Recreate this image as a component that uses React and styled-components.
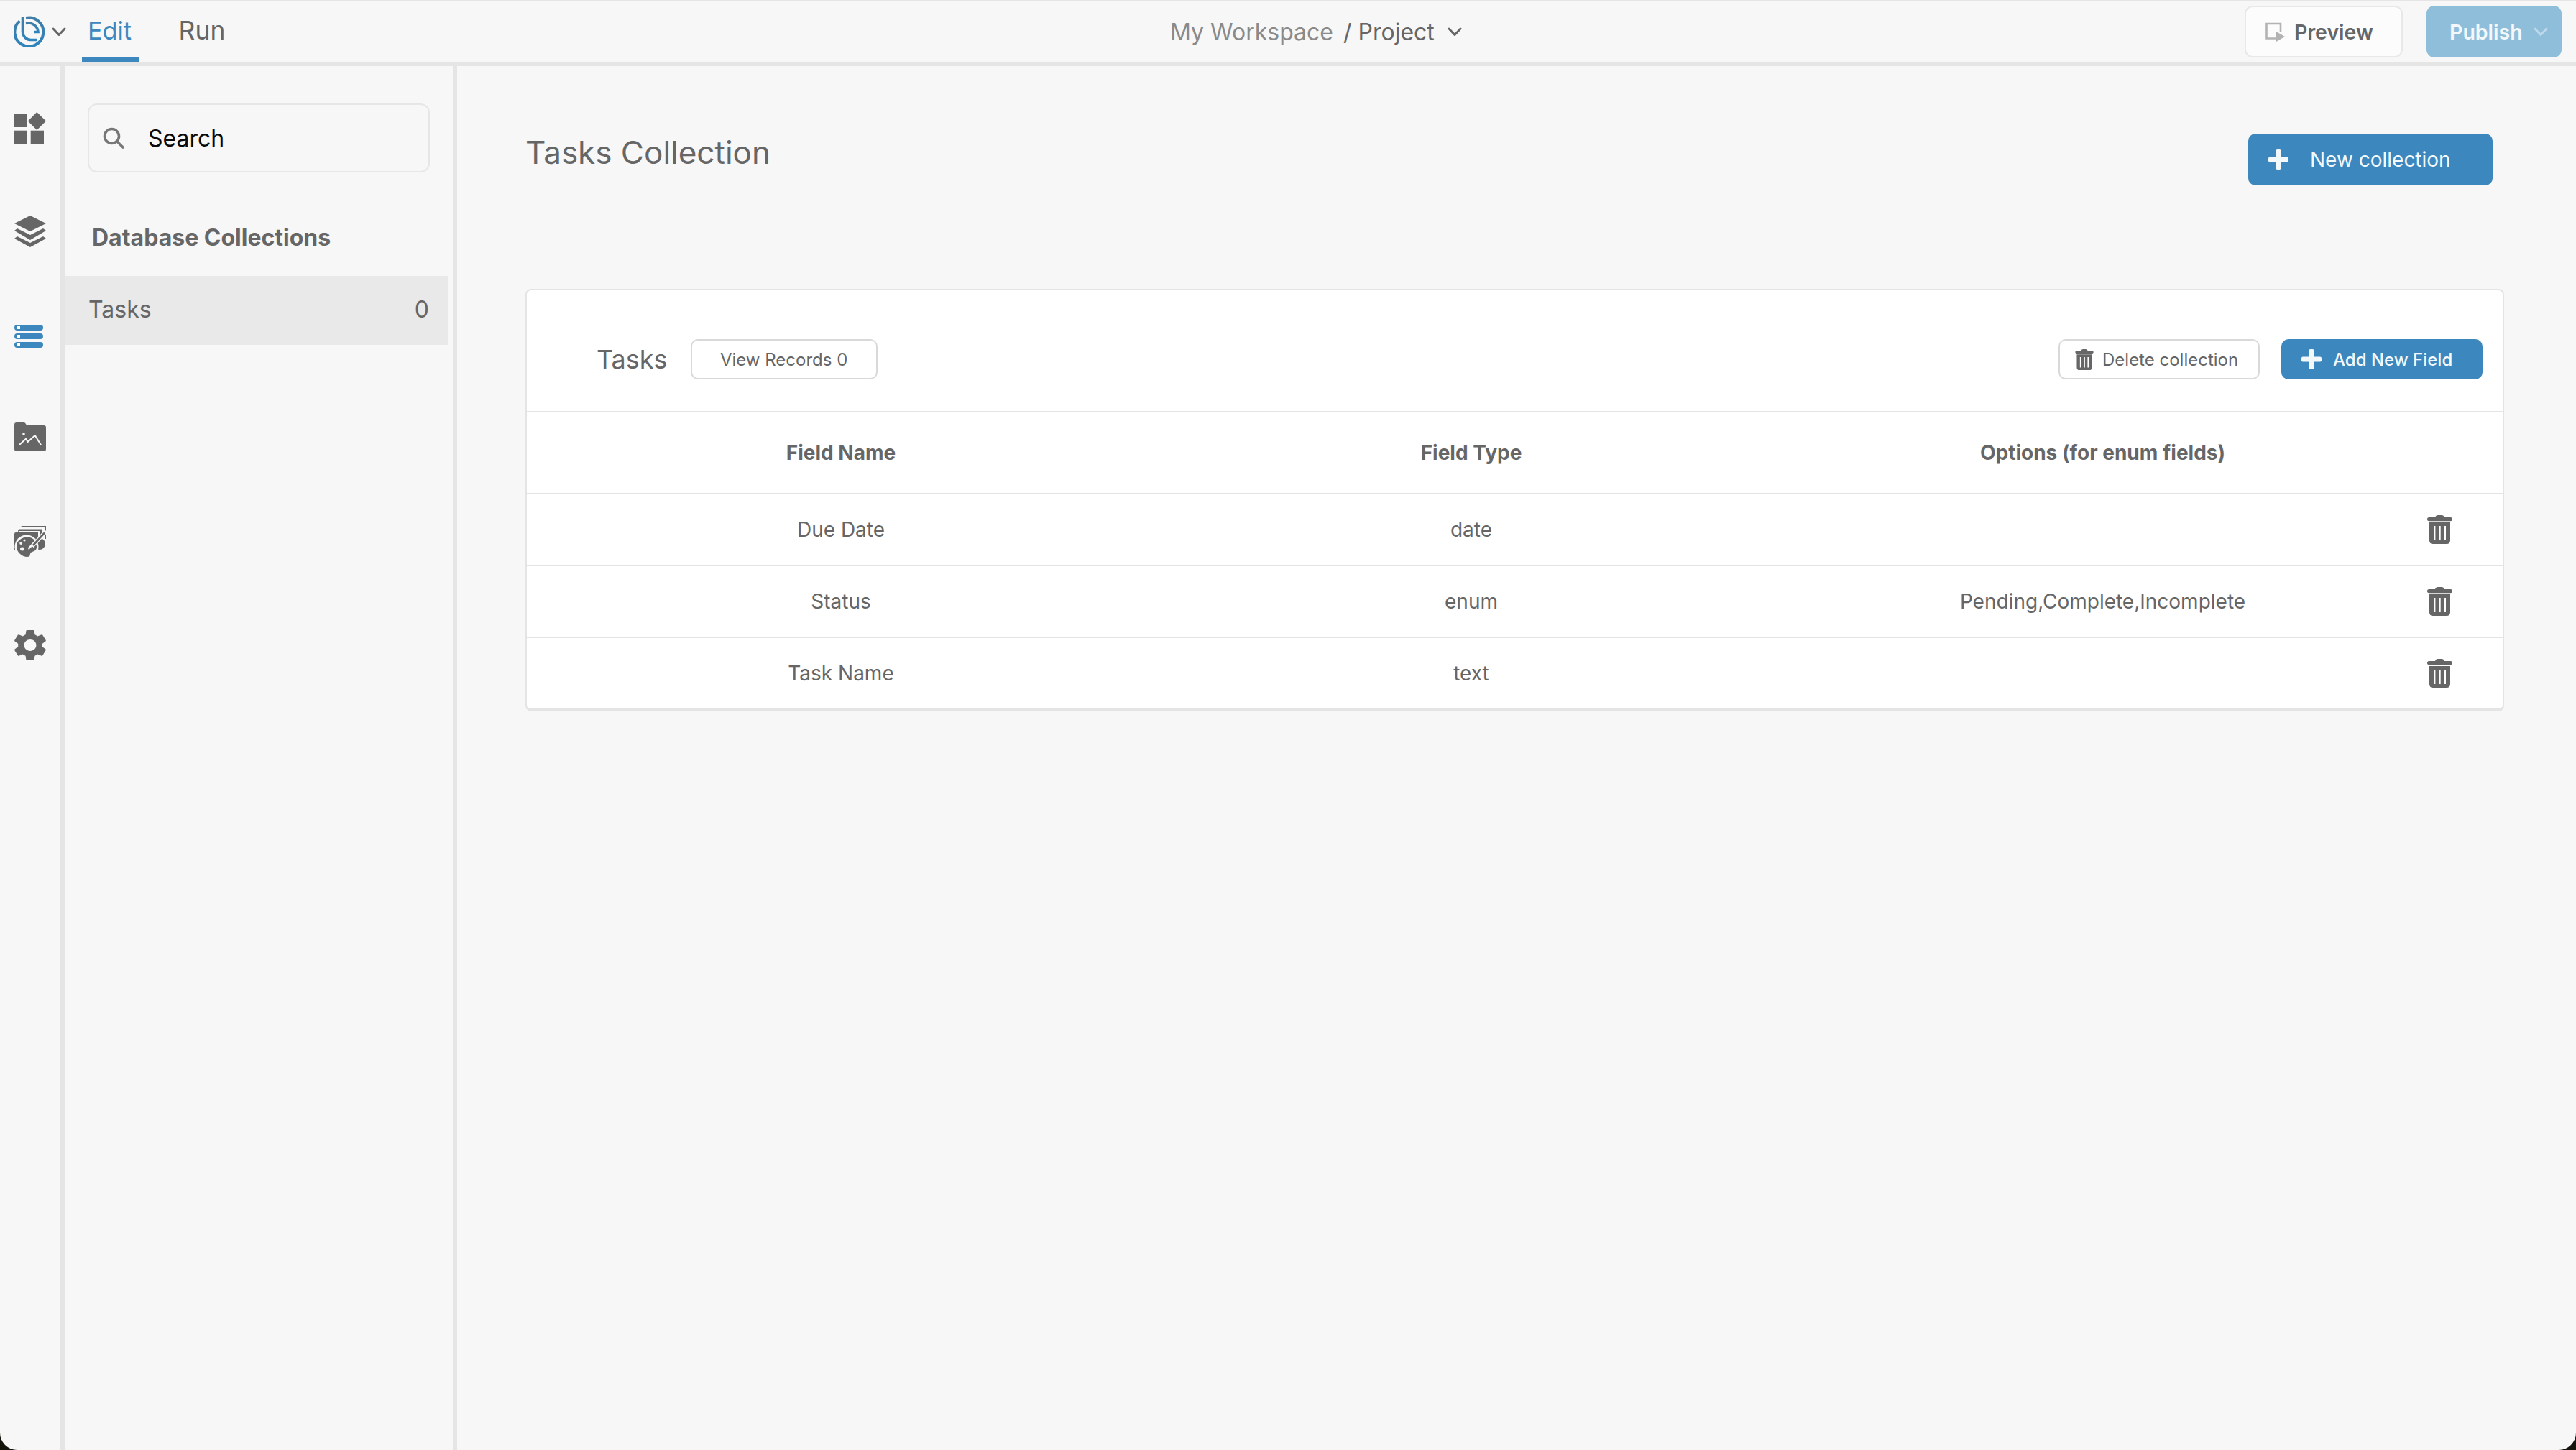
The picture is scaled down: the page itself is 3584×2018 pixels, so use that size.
import React from "react";
import styled, { createGlobalStyle } from "styled-components";

const GlobalStyle = createGlobalStyle`
  html, body { margin: 0; padding: 0; width: 3584px; height: 2018px; overflow: hidden; background: #14140c; }
  #root { width: 3584px; height: 2018px; }
  * { box-sizing: border-box; }
`;

const Page = styled.div`
  width: 3584px; height: 2018px; background: #f7f7f7; overflow: hidden;
  border-radius: 0 0 24px 24px; display: flex; flex-direction: column;
  font-family: Inter, "Liberation Sans", sans-serif; color: #666;
`;

const TopBar = styled.header`
  flex: none; height: 92px; display: flex; align-items: flex-start;
  border-top: 2px solid #e5e5e5; border-bottom: 6px solid #e5e5e5;
`;
const BarLeft = styled.div`
  width: 1628px; height: 84px; display: flex; align-items: flex-start; padding-left: 20px;
`;
const LogoWrap = styled.div`
  width: 44px; height: 44px; margin-top: 20px; flex: none; display: flex;
`;
const LogoChevron = styled.div`
  width: 20px; margin: 36px 0 0 8px; flex: none; display: flex;
`;
const Tab = styled.div`
  height: 84px; width: ${(p) => p.$w}px; margin-left: ${(p) => p.$ml}px; text-align: center;
  font-size: ${(p) => p.$fs}px; line-height: 42px; padding: 20px ${(p) => p.$pr}px 0 0;
  color: ${(p) => (p.$active ? "#3c87be" : "#666")};
  border-bottom: 6px solid ${(p) => (p.$active ? "#3c87be" : "transparent")};
`;
const Crumbs = styled.div`
  height: 84px; display: flex; align-items: center; font-size: 32px;
`;
const CrumbMuted = styled.span`color: #8a8a8a; margin-right: 14px;`;
const CrumbChevron = styled.span`display: flex; margin-left: 18px;`;
const BarRight = styled.div`
  margin-left: auto; padding: 6px 20px 0 0; display: flex; gap: 33px;
`;
const PreviewButton = styled.div`
  width: 220px; height: 72px; border: 2.5px solid #e8e8e8; border-radius: 11px; background: #fcfcfc;
  display: flex; align-items: center; padding-left: 27px; gap: 13px;
  font-size: 28.5px; font-weight: 600; color: #666;
`;
const PublishButton = styled.div`
  width: 188px; height: 72px; border-radius: 11px; background: #8fbedb; color: #f4f8fb;
  display: flex; align-items: center; padding-left: 32px; gap: 15px;
  font-size: 28.5px; font-weight: 600;
`;

const Body = styled.div`flex: 1; display: flex; min-height: 0;`;

const Rail = styled.nav`
  width: 90px; flex: none; border-right: 6px solid #e5e5e5; padding-left: 20px;
  display: flex; flex-direction: column;
`;
const RailItem = styled.div`
  height: 44px; width: 44px; margin-top: ${(p) => p.$top}px; display: flex; align-items: center; justify-content: flex-start;
  color: ${(p) => (p.$active ? "#3c87be" : "#666")};
`;

const Panel = styled.aside`
  width: 546px; flex: none; border-right: 6px solid #e5e5e5; padding-top: 52px; padding-right: 6px;
`;
const SearchBox = styled.div`
  width: 476px; height: 96px; margin-left: 32px; border: 2px solid #e6e6e6; border-radius: 13px;
  display: flex; align-items: center; padding-left: 19px; gap: 33px;
  font-size: 32px; color: #0a0a0a;
`;
const PanelTitle = styled.h2`
  margin: 68px 0 0 38px; height: 45px; font-size: 32px; line-height: 46px; font-weight: 700; color: #666;
`;
const CollectionRow = styled.div`
  margin-top: 31px; height: 96px; background: #e9e9e9; display: flex; align-items: center;
  justify-content: space-between; padding: 0 27px 3px 33px; font-size: 32px; color: #666;
`;

const Main = styled.main`flex: 1; padding: 0 100px 0 95px; min-width: 0;`;
const MainHead = styled.div`
  height: 310px; display: flex; justify-content: space-between; align-items: flex-start; padding-right: 16px;
`;
const MainTitle = styled.h1`
  margin: 92px 0 0; font-size: 44px; line-height: 56px; font-weight: 400; color: #666;
`;
const PrimaryButton = styled.div`
  margin-top: ${(p) => p.$top || 0}px; width: ${(p) => p.$w}px; height: ${(p) => p.$h}px;
  padding-left: ${(p) => p.$pl}px; gap: ${(p) => p.$gap}px; font-size: ${(p) => p.$fs}px;
  font-weight: ${(p) => p.$fw || 400};
  background: #3c87be; color: #f3f8fb; border-radius: 10px; display: flex; align-items: center;
`;

const Card = styled.section`
  background: #fff; border: 2px solid #e4e4e4; border-bottom-width: 4px; border-radius: 8px;
`;
const CardHead = styled.div`
  height: 170px; padding: 68px 28px 44px 97px; display: flex; align-items: center;
  border-bottom: 2px solid #e4e4e4;
`;
const CardTitle = styled.div`font-size: 36px; margin-right: 32px;`;
const ButtonSpacer = styled.div`flex: 1;`;
const OutlineButton = styled.div`
  height: 56px; width: ${(p) => p.$w}px; margin-right: ${(p) => p.$mr || 0}px;
  border: 2px solid #d9d9d9; border-radius: 10px; font-size: 24px; color: #666;
  display: flex; align-items: center; justify-content: ${(p) => (p.$icon ? "flex-start" : "center")};
  padding-left: ${(p) => (p.$icon ? 21 : 0)}px; gap: 12px; background: #fff;
`;
const Row = styled.div`
  display: grid; grid-template-columns: 874px 880px 877px 1fr; align-items: center;
  height: ${(p) => p.$h}px; font-size: 28px; font-weight: ${(p) => (p.$head ? 700 : 400)}; color: #666;
  border-bottom: ${(p) => (p.$last ? "none" : "2px solid #e4e4e4")};
`;
const Cell = styled.div`text-align: center;`;
const ActionCell = styled.div`padding-left: 13px; display: flex;`;

const Chevron = ({ size = 20, color = "#666", sw = 3 }) => (
  <svg width={size} height={size * 0.65} viewBox="0 0 20 13" fill="none">
    <path d="M2 2l8 8.5L18 2" stroke={color} strokeWidth={sw} strokeLinecap="round" strokeLinejoin="round" />
  </svg>
);

const Logo = () => (
  <svg width="44" height="44" viewBox="0 0 44 44" fill="none">
    <defs>
      <linearGradient id="lg" x1="0" y1="0" x2="0" y2="1">
        <stop offset="0" stopColor="#3f7fa8" />
        <stop offset="1" stopColor="#2f83bb" />
      </linearGradient>
    </defs>
    <g stroke="url(#lg)" strokeWidth="4">
      <path d="M7.5 7.2A20 20 0 1 0 16 3" />
      <path d="M11.5 1.5V22A11.5 11.5 0 0 0 23 33.5H32" strokeWidth="3.6" />
      <path d="M16 10.6A13.4 13.4 0 0 1 33 22.5H27.5" strokeWidth="3.6" />
    </g>
  </svg>
);

const DashIcon = () => (
  <svg width="44" height="44" viewBox="0 0 44 44" fill="currentColor">
    <rect x="0" y="3" width="18" height="18" />
    <rect x="0" y="25.7" width="18" height="18.3" />
    <rect x="22.7" y="25.7" width="18.3" height="18.3" />
    <path d="M31.3 0L44 12.5 31.3 25 18.8 12.5z" />
  </svg>
);
const LayersIcon = () => (
  <svg width="44" height="44" viewBox="0 0 44 44" fill="currentColor">
    <path d="M22 0L44 11 22 22 0 11z" strokeLinejoin="round" />
    <path d="M4 18L0 21 22 34 44 21 40 18 22 27z" />
    <path d="M4 29L0 32 22 44 44 32 40 29 22 38z" />
  </svg>
);
const ServerIcon = () => (
  <svg width="40" height="32" viewBox="0 0 40 32">
    {[0, 12, 24].map((y) => (
      <g key={y}>
        <rect x="0" y={y} width="40" height="8" rx="4" fill="currentColor" />
        <rect x="4" y={y + 2} width="4" height="4" fill="#fff" />
      </g>
    ))}
  </svg>
);
const FolderIcon = () => (
  <svg width="44" height="40" viewBox="0 0 44 40">
    <path fill="currentColor" d="M3 0H13Q15 0 16 2L17 4H41Q44 4 44 7V37Q44 40 41 40H3Q0 40 0 37V3Q0 0 3 0Z" />
    <circle cx="13" cy="16" r="1.8" fill="#f7f7f7" />
    <path d="M7.3 30.7L16 22.7 18.7 27 28.7 18 36.7 30.7" fill="none" stroke="#f7f7f7" strokeWidth="2" strokeLinecap="round" strokeLinejoin="round" />
  </svg>
);
const PaletteIcon = () => (
  <svg width="44" height="44" viewBox="0 0 44 44">
    <g fill="currentColor">
      <path d="M5 4V2Q5 0 7 0H41V18H39V2H5z" transform="translate(4 0)" />
      <path d="M5 8V7Q5 4.5 7 4.5H38V20H36V7H7z" />
      <path d="M2 9H33V34H0V11Q0 9 2 9Z" />
      <circle cx="35" cy="25" r="8" />
    </g>
    <circle cx="17" cy="29" r="16.5" fill="#f7f7f7" />
    <path fill="currentColor" d="M18 15.5C10 15.5 3 21 3 28.5 3 36 10 43 18 43 23 43 21 39 23 37 25 35 31 36 31 29 31 21 26 15.5 18 15.5Z" />
    <g fill="#f7f7f7">
      <circle cx="14" cy="20" r="1.6" />
      <circle cx="9.2" cy="24" r="2" />
      <ellipse cx="11" cy="32" rx="3" ry="2.4" />
    </g>
    <path d="M42.5 9L22 31" stroke="#f7f7f7" strokeWidth="5.5" strokeLinecap="round" />
    <path d="M42 9.5L26 27" stroke="currentColor" strokeWidth="2.6" />
    <path d="M19 35.5Q21 31 25 28.5L27.5 31Q26 35 20.5 36.5Z" fill="currentColor" />
  </svg>
);
const GearIcon = () => (
  <svg width="44" height="44" viewBox="2.6 2 18.8 20" fill="currentColor" preserveAspectRatio="none">
    <path d="M19.14 12.94c.04-.3.06-.61.06-.94 0-.32-.02-.64-.07-.94l2.03-1.58c.18-.14.23-.41.12-.61l-1.92-3.32c-.12-.22-.37-.29-.59-.22l-2.39.96c-.5-.38-1.03-.7-1.62-.94l-.36-2.54c-.04-.24-.24-.41-.48-.41h-3.84c-.24 0-.43.17-.47.41l-.36 2.54c-.59.24-1.13.57-1.62.94l-2.39-.96c-.22-.08-.47 0-.59.22L2.74 8.87c-.12.21-.08.47.12.61l2.03 1.58c-.05.3-.09.63-.09.94s.02.64.07.94l-2.03 1.58c-.18.14-.23.41-.12.61l1.92 3.32c.12.22.37.29.59.22l2.39-.96c.5.38 1.03.7 1.62.94l.36 2.54c.05.24.24.41.48.41h3.84c.24 0 .44-.17.47-.41l.36-2.54c.59-.24 1.13-.56 1.62-.94l2.39.96c.22.08.47 0 .59-.22l1.92-3.32c.12-.22.07-.47-.12-.61l-2.01-1.58zM12 15.6c-1.98 0-3.6-1.62-3.6-3.6s1.62-3.6 3.6-3.6 3.6 1.62 3.6 3.6-1.62 3.6-3.6 3.6z" />
  </svg>
);
const SearchIcon = () => (
  <svg width="30" height="30" viewBox="0 0 30 30" fill="none" stroke="#777" strokeWidth="3.6" strokeLinecap="round">
    <circle cx="12.5" cy="12.5" r="10" />
    <path d="M20 20l8 8" />
  </svg>
);
const PreviewIcon = () => (
  <svg width="27" height="27" viewBox="0 0 27 27" fill="none">
    <path d="M21 14V2H1.5V22.5H14" stroke="#b3b3b3" strokeWidth="2.6" />
    <path d="M15 13L27 20 15 27z" fill="#b3b3b3" />
  </svg>
);
const PlusIcon = ({ size = 28 }) => (
  <svg width={size} height={size} viewBox="0 0 28 28" fill="#f3f8fb">
    <rect x="10.5" y="0" width="7" height="28" rx="2" />
    <rect x="0" y="10.5" width="28" height="7" rx="2" />
  </svg>
);
const TrashIcon = ({ w = 35, h = 40 }) => (
  <svg width={w} height={h} viewBox="0 0 35 40" fill="#666">
    <path d="M11 3Q12 0 15 0H20Q23 0 24 3Z" />
    <rect x="0" y="3" width="35" height="5.2" rx="2.6" />
    <path fillRule="evenodd" d="M3 10H32V35Q32 40 27 40H8Q3 40 3 35ZM9 15V35H11.4V15ZM16.3 15V35H18.7V15ZM23.6 15V35H26V15Z" />
  </svg>
);

const rows = [
  ["Due Date", "date", ""],
  ["Status", "enum", "Pending,Complete,Incomplete"],
  ["Task Name", "text", ""],
];

export default function App() {
  return (
    <Page>
      <GlobalStyle />
      <TopBar>
        <BarLeft>
          <LogoWrap><Logo /></LogoWrap>
          <LogoChevron><Chevron /></LogoChevron>
          <Tab $active $w={80} $ml={22} $fs={34.3} $pr={3}>Edit</Tab>
          <Tab $w={66} $ml={54} $fs={35.5} $pr={0}>Run</Tab>
        </BarLeft>
        <Crumbs>
          <CrumbMuted>My Workspace</CrumbMuted>
          <span>/ Project</span>
          <CrumbChevron><Chevron /></CrumbChevron>
        </Crumbs>
        <BarRight>
          <PreviewButton><PreviewIcon />Preview</PreviewButton>
          <PublishButton>Publish<Chevron color="#bcd8ea" /></PublishButton>
        </BarRight>
      </TopBar>
      <Body>
        <Rail>
          <RailItem $top={64}><DashIcon /></RailItem>
          <RailItem $top={100}><LayersIcon /></RailItem>
          <RailItem $top={102} $active><ServerIcon /></RailItem>
          <RailItem $top={96}><FolderIcon /></RailItem>
          <RailItem $top={102}><PaletteIcon /></RailItem>
          <RailItem $top={100}><GearIcon /></RailItem>
        </Rail>
        <Panel>
          <SearchBox><SearchIcon />Search</SearchBox>
          <PanelTitle>Database Collections</PanelTitle>
          <CollectionRow><span>Tasks</span><span>0</span></CollectionRow>
        </Panel>
        <Main>
          <MainHead>
            <MainTitle>Tasks Collection</MainTitle>
            <PrimaryButton $top={94} $w={340} $h={72} $pl={28} $gap={30} $fs={28}>
              <PlusIcon />New collection
            </PrimaryButton>
          </MainHead>
          <Card>
            <CardHead>
              <CardTitle>Tasks</CardTitle>
              <OutlineButton $w={260}>View Records 0</OutlineButton>
              <ButtonSpacer />
              <OutlineButton $w={280} $icon $mr={30}><TrashIcon w={26} h={29} />Delete collection</OutlineButton>
              <PrimaryButton $w={280} $h={56} $pl={28} $gap={16} $fs={24} $fw={500}>
                <PlusIcon />Add New Field
              </PrimaryButton>
            </CardHead>
            <Row $head $h={114}>
              <Cell>Field Name</Cell><Cell>Field Type</Cell><Cell>Options (for enum fields)</Cell><div />
            </Row>
            {rows.map((r, i) => (
              <Row key={r[0]} $h={i === rows.length - 1 ? 98 : 100} $last={i === rows.length - 1}>
                <Cell>{r[0]}</Cell><Cell>{r[1]}</Cell><Cell>{r[2]}</Cell>
                <ActionCell><TrashIcon /></ActionCell>
              </Row>
            ))}
          </Card>
        </Main>
      </Body>
    </Page>
  );
}
